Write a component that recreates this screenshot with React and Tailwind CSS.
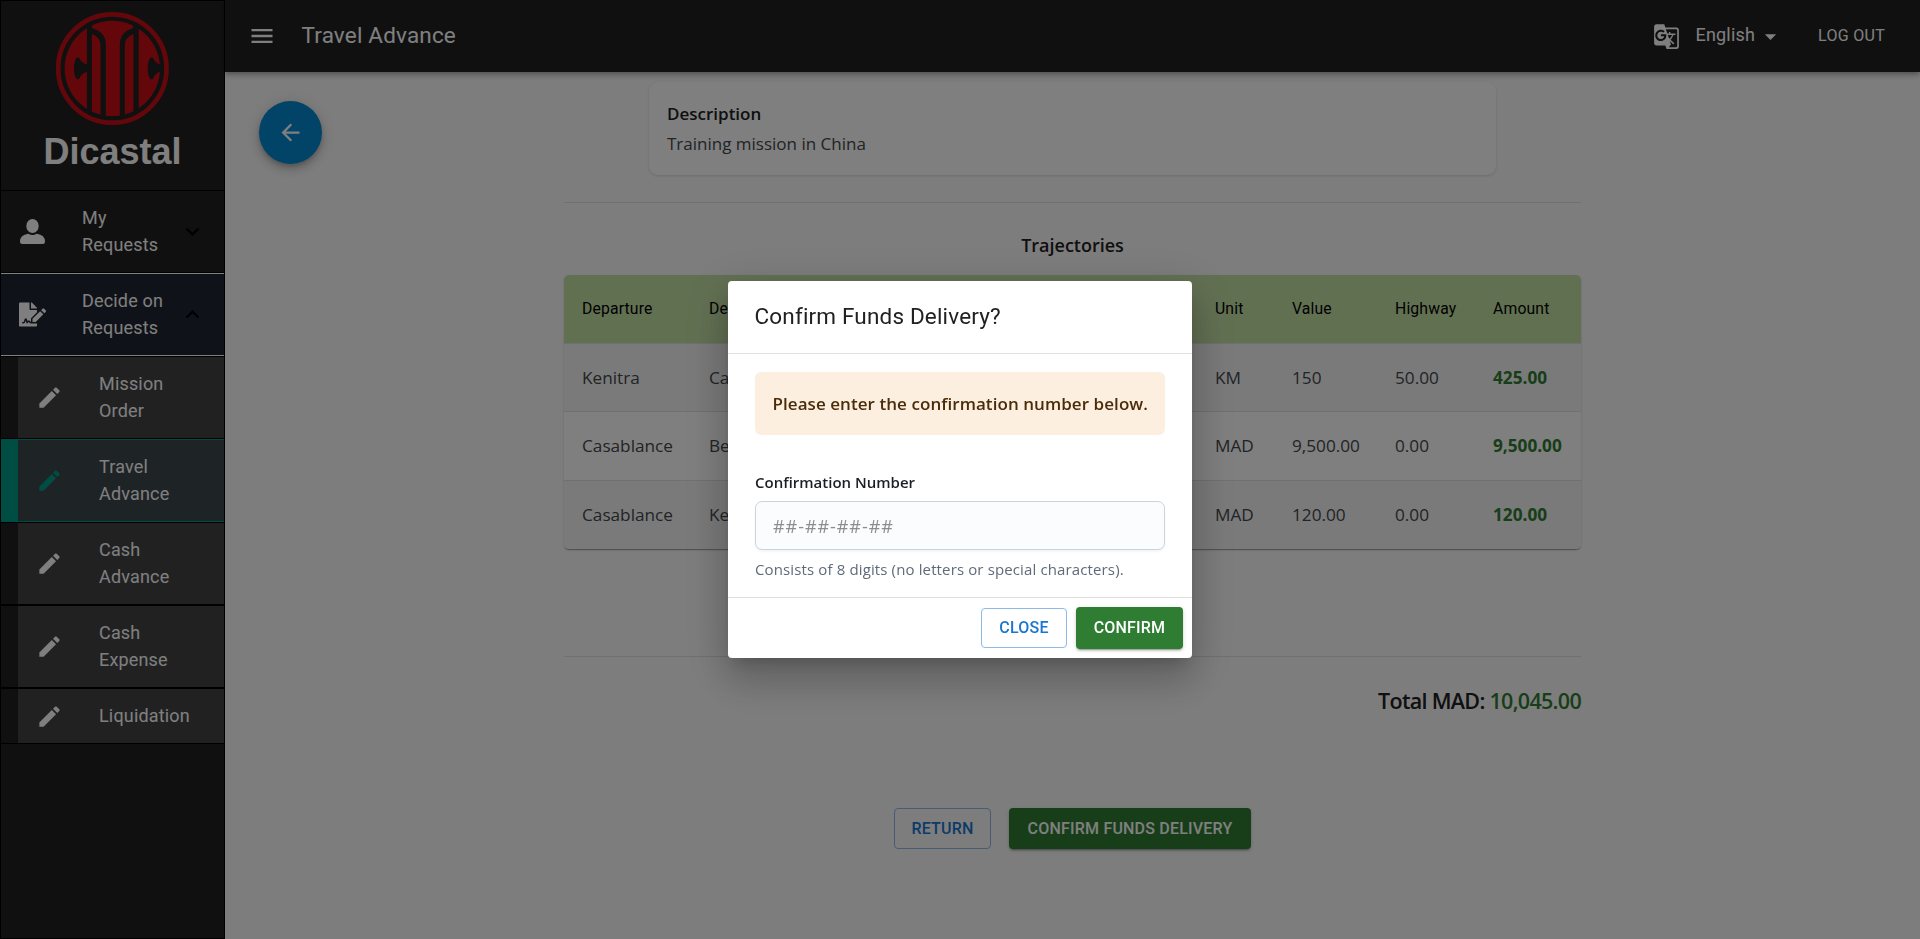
import React from "react";
import { MdMenu, MdArrowBack, MdEdit, MdGTranslate, MdArrowDropDown, MdExpandMore } from "react-icons/md";
import { FaFileSignature } from "react-icons/fa";

function Logo() {
  return (
    <svg viewBox="168 36 340 340" className="size-[113px]" fill="#c70f17">
      <defs>
        <clipPath id="disc">
          <circle cx="337.5" cy="206" r="143.5" />
        </clipPath>
      </defs>
      <circle cx="337.5" cy="206" r="163" fill="none" stroke="#c70f17" strokeWidth="14" />
      <g clipPath="url(#disc)">
        <path d="M190 50H261V194Q245 190 237 173H230Q222 184 222 206Q222 228 230 238H237Q245 220 261 216V376H190Z" />
        <path d="M417 50H481V194Q467 190 459 173H452Q444 184 444 206Q444 228 452 238H459Q467 220 481 216H490V376H417Z" />
        <path d="M276 102Q302 112 302 138V376H276Z" />
        <path d="M401 102Q375 112 375 138V376H401Z" />
        <path d="M276 40H400V84Q360 96 360 134V349H318V134Q318 96 276 84Z" />
      </g>
    </svg>
  );
}

function PersonIcon() {
  return (
    <svg viewBox="0 0 27 27" className="size-[27px]" fill="currentColor">
      <ellipse cx="13.5" cy="8" rx="6.2" ry="7" />
      <path d="M9.3 15.7Q13.5 18.3 17.7 15.7Q26 17 26 23.5Q26 26 23.5 26H3.5Q1 26 1 23.5Q1 17 9.3 15.7Z" />
    </svg>
  );
}

const subItems = [
  { a: "Mission", b: "Order" },
  { a: "Travel", b: "Advance", active: true },
  { a: "Cash", b: "Advance" },
  { a: "Cash", b: "Expense" },
  { a: "Liquidation" },
];

function Sidebar() {
  return (
    <aside className="flex h-[939px] w-[225px] shrink-0 flex-col border border-black bg-[#212121] text-[18px] leading-[27px] tracking-[0.17px] text-white">
      <div className="flex h-[190px] flex-col items-center border-b border-black pt-[11px]">
        <Logo />
        <div className="mt-[6px] font-['Liberation_Sans',sans-serif] text-[36px] leading-[42px] font-bold tracking-normal">Dicastal</div>
      </div>
      <div className="flex h-[82px] items-center border-b border-black pl-[18px]">
        <PersonIcon />
        <div className="ml-[36px] w-[90px] pb-[2px]">My<br />Requests</div>
        <MdExpandMore className="ml-[7px] size-[27px] text-black" />
      </div>
      <div className="flex h-[83px] items-center border-y border-white bg-[#1f2530] pl-[18px]">
        <FaFileSignature className="size-[27px]" />
        <div className="ml-[36px] w-[90px] pb-[2px]">Decide on<br />Requests</div>
        <MdExpandMore className="ml-[7px] size-[27px] rotate-180 text-black" />
      </div>
      {subItems.map((s) => (
        <div
          key={s.a + s.b}
          className={
            "flex shrink-0 items-stretch border-y " +
            (s.b ? "h-[83px] " : "h-[56px] ") +
            (s.active ? "border-[#009c86] bg-[#3d464d]" : "border-black bg-[#424345]")
          }
        >
          <div className={"mr-[18px] w-[17px] shrink-0 " + (s.active ? "bg-[#009c86]" : "bg-[#212121]")} />
          <div className="flex items-center">
            <MdEdit className={"size-[27px] " + (s.active ? "text-[#009c86]" : "")} />
            <div className="ml-[36px] pb-px">{s.a}{s.b && <br />}{s.b}</div>
          </div>
        </div>
      ))}
    </aside>
  );
}

const cols = "grid grid-cols-[127px_506px_77px_103px_98px_106px] items-center *:pl-[18px]";
const rows = [
  ["Kenitra", "Casablance", "KM", "150", "50.00", "425.00"],
  ["Casablance", "Beijing", "MAD", "9,500.00", "0.00", "9,500.00"],
  ["Casablance", "Kenitra", "MAD", "120.00", "0.00", "120.00"],
];

function Content() {
  return (
    <main className="flex h-[867px] justify-center bg-[#fbfbfb] font-['Open_Sans',sans-serif] text-[17px]">
      <div className="flex w-[339px] shrink-0 pt-[29px] pl-[34px]">
        <button className="flex size-[63px] items-center justify-center rounded-full bg-[#0288d1] text-white shadow-[0_3px_5px_-1px_rgba(0,0,0,0.2),0_6px_10px_0_rgba(0,0,0,0.14),0_1px_18px_0_rgba(0,0,0,0.12)]">
          <MdArrowBack className="size-[27px]" />
        </button>
      </div>
      <div className="flex w-[1017px] shrink-0 flex-col">
        <section className="mx-auto mt-[10px] h-[93px] w-[847px] rounded-[9px] bg-white px-[18px] pt-[17px] shadow-[0_1px_3px_rgba(0,0,0,0.14)]">
          <div className="leading-[30px] font-semibold text-[#212121]">Description</div>
          <div className="leading-[30px] text-[#43484d]">Training mission in China</div>
        </section>
        <hr className="mt-[27px] border-[#e0e0e0]" />
        <h2 className="mt-[25px] h-[47px] text-center text-[18px] leading-[34px] font-semibold text-[#212121]">Trajectories</h2>
        <div className="overflow-hidden rounded-[5px] bg-white shadow-[0_2px_1px_-1px_rgba(0,0,0,0.2),0_1px_1px_0_rgba(0,0,0,0.14),0_1px_3px_0_rgba(0,0,0,0.12)]">
          <div className={cols + " h-[69px] border-b border-[#e0e0e0] bg-[#c5e1a5] font-[Roboto] text-[15.75px] tracking-[0.15px] text-black"}>
            <span>Departure</span><span>Destination</span><span>Unit</span><span>Value</span><span>Highway</span><span>Amount</span>
          </div>
          {rows.map((r, i) => (
            <div key={i} className={cols + " h-[68.4px] border-b border-[#e0e0e0] text-[17.2px] text-[#43484d] last:border-0 " + (i % 2 ? "bg-white" : "bg-[#f5f5f5]")}>
              {r.map((c, j) => (
                <span key={j} className={j === 5 ? "font-bold text-[#2e7d32]" : ""}>{c}</span>
              ))}
            </div>
          ))}
        </div>
        <hr className="mt-[107px] border-[#e0e0e0]" />
        <div className="mt-[27px] text-right text-[21.5px] leading-[34px] font-semibold tracking-[-0.7px] text-[#212121]">
          Total MAD: <span className="text-[#2e7d32]">10,045.00</span>
        </div>
        <div className="mt-[90px] flex justify-center gap-[18px] font-[Roboto] text-[16px] font-medium tracking-[0.2px]">
          <button className="h-[41px] w-[97px] rounded-[4px] border border-[#8cbae8] text-[#1976d2]">RETURN</button>
          <button className="h-[41px] w-[242px] rounded-[4px] bg-[#2e7d32] text-white shadow-[0_3px_1px_-2px_rgba(0,0,0,0.2),0_2px_2px_0_rgba(0,0,0,0.14),0_1px_5px_0_rgba(0,0,0,0.12)]">CONFIRM FUNDS DELIVERY</button>
        </div>
      </div>
      <div className="w-[339px] shrink-0" />
    </main>
  );
}

function Dialog() {
  return (
    <div className="fixed inset-0 z-20 flex items-start justify-center bg-black/50 pt-[281px]">
      <div className="flex h-[377px] w-[464px] flex-col rounded-[4px] bg-white font-['Open_Sans',sans-serif] shadow-[0_11px_15px_-7px_rgba(0,0,0,0.2),0_24px_38px_3px_rgba(0,0,0,0.14),0_9px_46px_8px_rgba(0,0,0,0.12)]">
        <h1 className="h-[72px] px-[26.5px] font-[Roboto] text-[22.5px] leading-[70px] tracking-[0.17px] text-[#212121]">Confirm Funds Delivery?</h1>
        <div className="flex h-[245px] flex-col border-y border-[#e0e0e0] px-[27px] pt-[18px]">
          <div className="flex h-[63px] items-center rounded-[6px] bg-[#fdefe0] px-[17.5px] text-[17px] font-semibold tracking-[0.06px] whitespace-nowrap text-[#4a2c0a]">
            Please enter the confirmation number below.
          </div>
          <label className="mt-[35px] text-[15px] leading-[24px] font-semibold text-[#1c2025]">Confirmation Number</label>
          <input
            placeholder="##-##-##-##"
            className="mt-[7px] h-[49px] rounded-[7px] border border-[#c9d4df] bg-[#fbfcfe] px-[17px] text-[18px] tracking-[0.95px] shadow-[0_2px_2px_#f3f6f9] placeholder:text-[#8b8d90]"
          />
          <div className="mt-[7px] text-[15px] leading-[24px] tracking-[0.13px] text-[#5f6b7a]">Consists of 8 digits (no letters or special characters).</div>
        </div>
        <div className="flex flex-1 items-center justify-end gap-[9px] pr-[9px] font-[Roboto] text-[16px] font-medium tracking-[0.2px]">
          <button className="h-[40px] w-[86px] rounded-[4px] border border-[#8cbae8] text-[#1976d2]">CLOSE</button>
          <button className="h-[42px] w-[107px] rounded-[4px] bg-[#2e7d32] text-white shadow-[0_3px_1px_-2px_rgba(0,0,0,0.2),0_2px_2px_0_rgba(0,0,0,0.14),0_1px_5px_0_rgba(0,0,0,0.12)]">CONFIRM</button>
        </div>
      </div>
    </div>
  );
}

export default function App() {
  return (
    <div className="flex h-[939px] w-full overflow-hidden font-[Roboto]">
      <Sidebar />
      <div className="flex flex-1 flex-col">
        <header className="relative z-10 flex h-[72px] items-center bg-[#212121] text-white shadow-[0_2px_4px_-1px_rgba(0,0,0,0.2),0_4px_5px_0_rgba(0,0,0,0.14),0_1px_10px_0_rgba(0,0,0,0.12)]">
          <MdMenu className="ml-[22.5px] size-[28px]" />
          <div className="ml-[26px] pb-px text-[22.5px] tracking-[0.17px]">Travel Advance</div>
          <div className="ml-auto flex items-center">
            <MdGTranslate className="size-[27px]" />
            <span className="ml-[16px] pb-[3px] text-[18px] tracking-[0.17px]">English</span>
            <MdArrowDropDown className="ml-[2px] size-[27px]" />
            <span className="mr-[35px] ml-[34px] pb-px text-[16px] tracking-[0.3px]">LOG OUT</span>
          </div>
        </header>
        <Content />
      </div>
      <Dialog />
    </div>
  );
}
